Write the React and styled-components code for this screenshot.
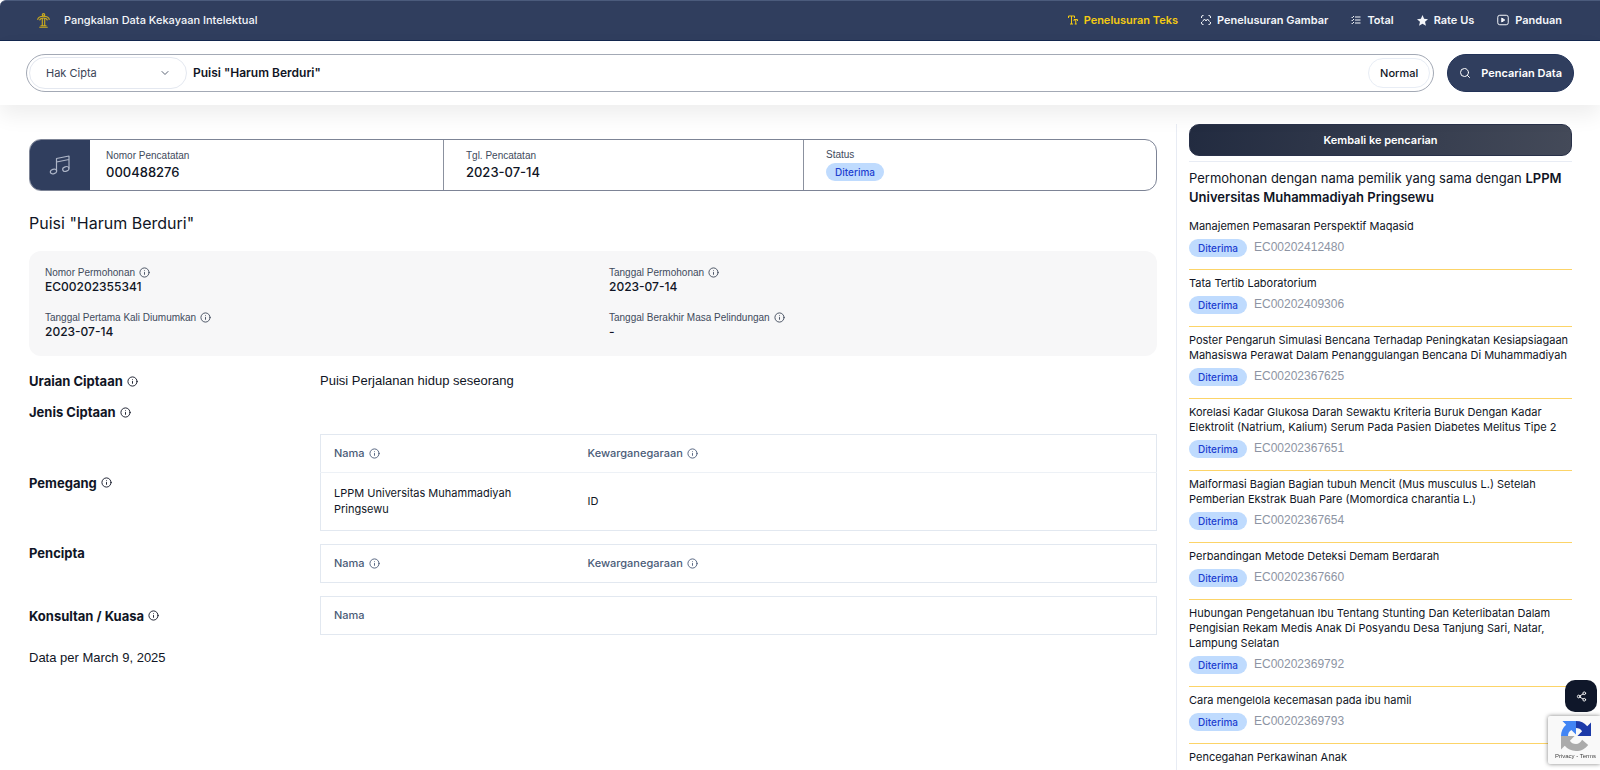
import React from "react";
import styled, { createGlobalStyle } from "styled-components";
import { ChevronDown, Info, Search, Share2 } from "lucide-react";

const Global = createGlobalStyle`
  *, *::before, *::after { box-sizing: border-box; }
  html { background: #fff; }
  body { margin: 0; font-family: Inter, "Liberation Sans", sans-serif; color: #101525; font-size: 12px; }
  button, input, select { font-family: inherit; color: inherit; }
  h1, h2, p, dl, dd, ul { margin: 0; padding: 0; }
  a { color: inherit; text-decoration: none; }
`;

const plainFont = `font-family: "Liberation Sans", Arial, sans-serif;`;

const Page = styled.div`
  height: 100vh;
  overflow: hidden;
  display: flex;
  flex-direction: column;
`;

const TopBar = styled.header`
  display: flex;
  align-items: center;
  justify-content: space-between;
  flex: none;
  height: 41px;
  padding: 0 38px 1px 37px;
  color: #f4f6fa;
  background: #303e5e;
  border-top: 1px solid #4b5b7c;
  border-bottom: 1px solid #14284f;
  border-top-left-radius: 6px;
`;

const Brand = styled.a`
  display: flex;
  align-items: center;
  gap: 14px;
  font-size: 11px;
  font-weight: 500;
`;

const Nav = styled.nav`
  display: flex;
  align-items: center;
  gap: 23px;
`;

const NavLink = styled.a`
  display: flex;
  align-items: center;
  gap: 6px;
  font-size: 11px;
  font-weight: 600;
  color: ${(p) => (p.$active ? "#f5cb12" : "inherit")};
`;

const SearchRow = styled.form`
  position: relative;
  z-index: 1;
  display: flex;
  flex: none;
  align-items: center;
  gap: 13px;
  padding: 13px 26px;
  background: #fff;
  box-shadow: 0 10px 20px rgba(0, 0, 0, 0.07);
`;

const SearchBox = styled.div`
  display: flex;
  flex: 1;
  align-items: center;
  height: 38px;
  padding: 0 3px 1px 2px;
  border: 1px solid #a3a9b5;
  border-radius: 19px;
`;

const SelectWrap = styled.label`
  position: relative;
  display: flex;
  align-items: center;
  width: 158px;
  svg { position: absolute; right: 16px; pointer-events: none; }
`;

const TypeSelect = styled.select`
  appearance: none;
  width: 100%;
  height: 32px;
  padding: 0 16px;
  font-size: 11px;
  color: #3a4356;
  background: #fff;
  border: 1px solid #e4e8f0;
  border-radius: 16px;
`;

const Query = styled.input`
  flex: 1;
  min-width: 0;
  padding: 0 6px;
  font-size: 12px;
  font-weight: 600;
  background: none;
  border: 0;
  outline: 0;
`;

const ModeButton = styled.button`
  height: 30px;
  padding: 0 11px;
  font-size: 11px;
  font-weight: 500;
  background: #fff;
  border: 1px solid #e8edf5;
  border-radius: 15px;
`;

const SubmitButton = styled.button`
  display: flex;
  align-items: center;
  gap: 10px;
  height: 38px;
  padding: 0 11px 1px;
  font-size: 11px;
  font-weight: 600;
  color: #fff;
  background: #303e5e;
  border: 1px solid #223257;
  border-radius: 19px;
`;

const Body = styled.div`
  display: flex;
  flex: 1;
  min-height: 0;
  gap: 19px;
  padding: 19px 28px 0 29px;
`;

const Main = styled.main`
  flex: 1;
  min-width: 0;
  padding-top: 15px;
`;

const SummaryCard = styled.section`
  display: grid;
  grid-template-columns: 60px 50fr 51fr 50fr;
  height: 52px;
  overflow: hidden;
  border: 1px solid #7d8496;
  border-radius: 12px;
`;

const SummaryIcon = styled.div`
  display: grid;
  place-items: center;
  color: #aeb6c8;
  background: #303e5e;
`;

const SummaryCell = styled.div`
  display: flex;
  flex-direction: column;
  align-items: flex-start;
  justify-content: center;
  gap: 2px;
  padding: 0 0 2px 16px;
  & + & { padding-left: 22px; border-left: 1px solid #8b919f; }
`;

const Label = styled.span`
  ${plainFont}
  display: flex;
  align-items: center;
  gap: 4px;
  font-size: 10px;
  line-height: 13px;
  color: #414a5c;
`;

const SummaryValue = styled.strong`
  font-size: 13px;
  line-height: 16px;
  font-weight: 500;
`;

const Badge = styled.span`
  padding: 0 9px;
  font-size: 10px;
  line-height: 18px;
  font-weight: 500;
  color: #1d3fd0;
  background: #bfdbfe;
  border-radius: 9px;
`;

const Title = styled.h1`
  margin: 21px 0 17px;
  font-size: 16px;
  line-height: 22px;
  font-weight: 400;
`;

const Facts = styled.dl`
  display: grid;
  grid-template-columns: 1fr 1fr;
  row-gap: 17px;
  padding: 15px 0 17px;
  background: #f7f7f8;
  border-radius: 12px;
`;

const Fact = styled.div`
  padding-left: 16px;
  dd { font-size: 12px; line-height: 15px; font-weight: 500; }
`;

const Details = styled.div`
  display: grid;
  grid-template-columns: 278px 1fr;
  align-items: center;
  gap: 13px;
  padding-top: 16px;
`;

const RowLabel = styled.h2`
  display: flex;
  align-self: ${(p) => (p.$top ? "start" : "center")};
  align-items: center;
  gap: 4px;
  font-size: 13px;
  line-height: 18px;
  font-weight: 700;
`;

const RowText = styled.p`
  ${plainFont}
  font-size: 13px;
  line-height: 18px;
`;

const DataTable = styled.table`
  width: 100%;
  table-layout: fixed;
  border-collapse: collapse;
  border: 1px solid #e2e8f0;
  tbody tr { border-top: 1px solid #edf1f6; }
  th, td { padding: 0 13px 1px; text-align: left; font-size: 11px; line-height: 16px; font-weight: 400; }
  th { height: 38px; color: #4a5b78; font-weight: 500; }
  td { height: 58px; padding-right: 40px; }
`;

const HeadText = styled.span`
  display: flex;
  align-items: center;
  gap: 4px;
`;

const DataDate = styled.p`
  ${plainFont}
  margin-top: 13px;
  font-size: 13px;
  line-height: 20px;
`;

const Sidebar = styled.aside`
  display: flex;
  flex: none;
  flex-direction: column;
  width: 396px;
  padding-left: 12px;
  border-left: 1px solid #e8ecf4;
`;

const BackButton = styled.button`
  flex: none;
  height: 32px;
  padding-bottom: 2px;
  font-size: 11px;
  font-weight: 600;
  color: #fff;
  background: linear-gradient(100deg, #222b40, #444a59);
  border: 1px solid #293149;
  border-radius: 10px;
`;

const OwnerNote = styled.p`
  margin-top: 5px;
  padding: 7px 0 6px;
  font-size: 13px;
  line-height: 19px;
  border-top: 1px solid #e8ecf4;
  strong { font-weight: 600; }
`;

const ResultItem = styled.li`
  display: flex;
  flex-direction: column;
  gap: 5px;
  padding: 6px 0 12px;
  border-bottom: 1px solid #fcd468;
  list-style: none;
`;

const ResultTitle = styled.a`
  font-size: 11px;
  line-height: 15px;
`;

const ResultMeta = styled.div`
  display: flex;
  gap: 7px;
`;

const ResultNumber = styled.span`
  ${plainFont}
  font-size: 12px;
  line-height: 17px;
  color: #8d94a3;
`;

const ShareButton = styled.button`
  position: fixed;
  right: 3px;
  bottom: 58px;
  z-index: 2;
  display: grid;
  place-items: center;
  width: 32px;
  height: 32px;
  padding: 0;
  color: #fff;
  background: #0f172a;
  border: 0;
  border-radius: 10px;
`;

const Captcha = styled.div`
  ${plainFont}
  position: fixed;
  right: 0;
  bottom: 6px;
  z-index: 2;
  display: flex;
  flex-direction: column;
  align-items: center;
  width: 52px;
  height: 48px;
  padding: 5px 0 0 3px;
  font-size: 6px;
  line-height: 10px;
  color: #444;
  background: #f9f9f9;
  border-radius: 2px 0 0 2px;
  box-shadow: 0 0 4px rgba(0, 0, 0, 0.5);
`;

const InfoMark = () => <Info size={11} strokeWidth={2} />;

const results = [
  ["Manajemen Pemasaran Perspektif Maqasid", "EC00202412480"],
  ["Tata Tertib Laboratorium", "EC00202409306"],
  ["Poster Pengaruh Simulasi Bencana Terhadap Peningkatan Kesiapsiagaan Mahasiswa Perawat Dalam Penanggulangan Bencana Di Muhammadiyah", "EC00202367625"],
  ["Korelasi Kadar Glukosa Darah Sewaktu Kriteria Buruk Dengan Kadar Elektrolit (Natrium, Kalium) Serum Pada Pasien Diabetes Melitus Tipe 2", "EC00202367651"],
  ["Malformasi Bagian Bagian tubuh Mencit (Mus musculus L.) Setelah Pemberian Ekstrak Buah Pare (Momordica charantia L.)", "EC00202367654"],
  ["Perbandingan Metode Deteksi Demam Berdarah", "EC00202367660"],
  ["Hubungan Pengetahuan Ibu Tentang Stunting Dan Keterlibatan Dalam Pengisian Rekam Medis Anak Di Posyandu Desa Tanjung Sari, Natar, Lampung Selatan", "EC00202369792"],
  ["Cara mengelola kecemasan pada ibu hamil", "EC00202369793"],
  ["Pencegahan Perkawinan Anak", null],
];

const facts = [
  ["Nomor Permohonan", "EC00202355341"],
  ["Tanggal Permohonan", "2023-07-14"],
  ["Tanggal Pertama Kali Diumumkan", "2023-07-14"],
  ["Tanggal Berakhir Masa Pelindungan", "-"],
];

const Emblem = () => (
  <svg width="13" height="15" viewBox="0 0 13 15" fill="none" stroke="#cfae1c" strokeWidth="1.1">
    <circle cx="6.500" cy="1.800" r="1.200" />
    <path d="M.6 6.800C1 4.600 3 3.300 6.500 3.300s5.500 1.300 5.900 3.500M2.600 7.300C3 5.600 4.500 5 6.500 5s3.500.6 3.900 2.300" />
    <path d="M5.300 5v8M7.700 5v8M3.500 12.800h6M2.300 14.300h8.400" />
  </svg>
);

const TextIcon = () => (
  <svg width="10" height="10" viewBox="0 0 20 20" fill="none" stroke="currentColor" strokeWidth="2">
    <path d="M1 6V2h12v4M7 2v16M4 18h6M12 12V9h7v3M15.500 9v9M13.500 18h4" />
  </svg>
);

const ScanIcon = () => (
  <svg width="10" height="10" viewBox="0 0 20 20" fill="none" stroke="currentColor" strokeWidth="2" strokeLinejoin="round">
    <path d="M1 6V4q0-3 3-3h1M15 1h1q3 0 3 3v2M19 14v2q0 3-3 3h-1M5 19H4q-3 0-3-3v-2M3 13l4-5 3 4 3-4 4 5" />
  </svg>
);

const ChecksIcon = () => (
  <svg width="10" height="10" viewBox="0 0 20 20" fill="none" stroke="currentColor" strokeWidth="2">
    <path d="M8 4h11M8 10h11M8 16h11M1 4l1.500 1.500L6 2M1 10l1.500 1.500L6 8M1 16l1.500 1.500L6 14" />
  </svg>
);

const StarIcon = () => (
  <svg width="11" height="11" viewBox="0 0 24 24" fill="currentColor">
    <path d="M12 0l3.500 8.200 8.500.8-6.500 5.700 2 8.800L12 19l-7.500 4.500 2-8.800L0 9l8.500-.8z" />
  </svg>
);

const VideoIcon = () => (
  <svg width="12" height="12" viewBox="0 0 24 24" fill="none" stroke="currentColor" strokeWidth="2">
    <rect x="1.500" y="2.500" width="21" height="19" rx="4" />
    <path d="M9.500 8v8l6-4z" fill="currentColor" strokeLinejoin="round" />
  </svg>
);

const NotesIcon = () => (
  <svg width="22" height="22" viewBox="0 0 22 22" fill="none" stroke="currentColor" strokeWidth="1.200" strokeLinejoin="round">
    <path d="M7.500 17V4.500L20 2v12.500M7.500 8L20 5.500" />
    <ellipse cx="4.500" cy="17.500" rx="3.200" ry="2.300" transform="rotate(-18 4.500 17.500)" />
    <ellipse cx="16.800" cy="15" rx="3.200" ry="2.300" transform="rotate(-18 16.800 15)" />
  </svg>
);

const RecaptchaLogo = () => (
  <svg width="30" height="30" viewBox="0 0 64 64">
    <path fill="#1c3aa9" d="M64 32V3l-8 8C50 4 42 0 32 0v15c6 0 10 2 13 7l-10 10z" />
    <path fill="#4285f4" d="M32 0H3l8 8C4 14 0 22 0 32h15c0-6 2-10 7-13l10 10z" />
    <path fill="#ababab" d="M0 32v29l8-8c6 7 14 11 24 11 11 0 20-5 26-13L45 40c-3 5-7 9-13 9-6 0-10-2-13-7l10-10z" />
  </svg>
);

const HolderColumns = () => (
  <colgroup><col width="254" /><col /></colgroup>
);

const HolderHead = () => (
  <thead>
    <tr>
      <th><HeadText>Nama<InfoMark /></HeadText></th>
      <th><HeadText>Kewarganegaraan<InfoMark /></HeadText></th>
    </tr>
  </thead>
);

export default function App() {
  return (
    <Page>
      <Global />
      <TopBar>
        <Brand href="#"><Emblem />Pangkalan Data Kekayaan Intelektual</Brand>
        <Nav>
          <NavLink href="#" $active><TextIcon />Penelusuran Teks</NavLink>
          <NavLink href="#"><ScanIcon />Penelusuran Gambar</NavLink>
          <NavLink href="#"><ChecksIcon />Total</NavLink>
          <NavLink href="#"><StarIcon />Rate Us</NavLink>
          <NavLink href="#"><VideoIcon />Panduan</NavLink>
        </Nav>
      </TopBar>
      <SearchRow onSubmit={(e) => e.preventDefault()}>
        <SearchBox>
          <SelectWrap>
            <TypeSelect aria-label="Jenis"><option>Hak Cipta</option></TypeSelect>
            <ChevronDown size={12} color="#5b6475" />
          </SelectWrap>
          <Query aria-label="Kata kunci" defaultValue={'Puisi "Harum Berduri"'} />
          <ModeButton type="button">Normal</ModeButton>
        </SearchBox>
        <SubmitButton><Search size={12} />Pencarian Data</SubmitButton>
      </SearchRow>
      <Body>
        <Main>
          <SummaryCard>
            <SummaryIcon><NotesIcon /></SummaryIcon>
            <SummaryCell><Label>Nomor Pencatatan</Label><SummaryValue>000488276</SummaryValue></SummaryCell>
            <SummaryCell><Label>Tgl. Pencatatan</Label><SummaryValue>2023-07-14</SummaryValue></SummaryCell>
            <SummaryCell><Label>Status</Label><Badge>Diterima</Badge></SummaryCell>
          </SummaryCard>
          <Title>Puisi "Harum Berduri"</Title>
          <Facts>
            {facts.map(([name, value]) => (
              <Fact key={name}><dt><Label>{name}<InfoMark /></Label></dt><dd>{value}</dd></Fact>
            ))}
          </Facts>
          <Details>
            <RowLabel>Uraian Ciptaan<InfoMark /></RowLabel>
            <RowText>Puisi Perjalanan hidup seseorang</RowText>
            <RowLabel>Jenis Ciptaan<InfoMark /></RowLabel>
            <RowText />
            <RowLabel>Pemegang<InfoMark /></RowLabel>
            <DataTable>
              <HolderColumns />
              <HolderHead />
              <tbody><tr><td>LPPM Universitas Muhammadiyah Pringsewu</td><td>ID</td></tr></tbody>
            </DataTable>
            <RowLabel $top>Pencipta</RowLabel>
            <DataTable>
              <HolderColumns />
              <HolderHead />
            </DataTable>
            <RowLabel>Konsultan / Kuasa<InfoMark /></RowLabel>
            <DataTable>
              <thead><tr><th>Nama</th></tr></thead>
            </DataTable>
          </Details>
          <DataDate>Data per March 9, 2025</DataDate>
        </Main>
        <Sidebar>
          <BackButton type="button">Kembali ke pencarian</BackButton>
          <OwnerNote>Permohonan dengan nama pemilik yang sama dengan <strong>LPPM Universitas Muhammadiyah Pringsewu</strong></OwnerNote>
          <ul>
            {results.map(([title, number]) => (
              <ResultItem key={title}>
                <ResultTitle href="#">{title}</ResultTitle>
                {number && <ResultMeta><Badge>Diterima</Badge><ResultNumber>{number}</ResultNumber></ResultMeta>}
              </ResultItem>
            ))}
          </ul>
        </Sidebar>
      </Body>
      <ShareButton type="button" aria-label="Bagikan"><Share2 size={11} /></ShareButton>
      <Captcha><RecaptchaLogo />Privacy - Terms</Captcha>
    </Page>
  );
}
